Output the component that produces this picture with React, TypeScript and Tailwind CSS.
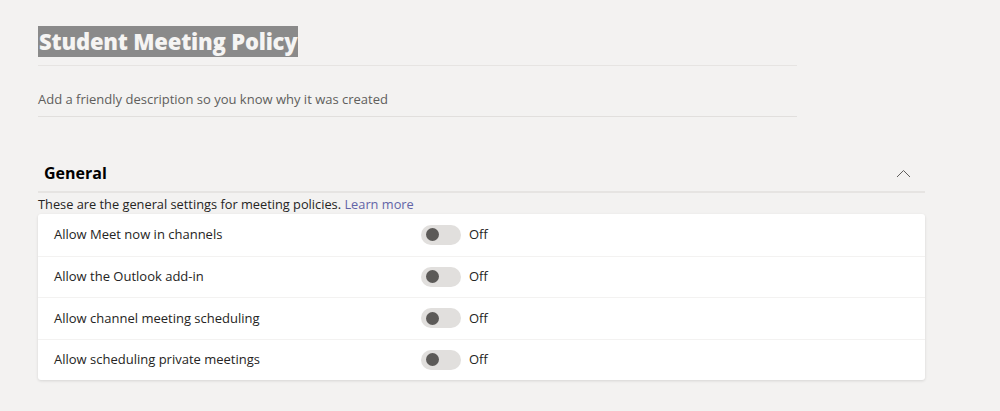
import React from "react";

const rows = [
  "Allow Meet now in channels",
  "Allow the Outlook add-in",
  "Allow channel meeting scheduling",
  "Allow scheduling private meetings",
];

function Toggle() {
  return (
    <div className="flex items-center">
      <div className="w-[40px] h-[20px] rounded-full bg-[#e1dfdd] flex items-center pl-[5px]">
        <div className="w-[13px] h-[13px] rounded-full bg-[#5c5a58]" />
      </div>
      <span className="ml-[8px] text-[13px] text-[#252423]">Off</span>
    </div>
  );
}

export default function App() {
  return (
    <div
      className="w-[1000px] h-[411px] bg-[#f3f2f1] overflow-hidden"
      style={{ fontFamily: '"Open Sans", "Noto Sans", sans-serif' }}
    >
      <div className="pl-[38px] pt-[26px]">
        <div className="w-[759px]">
          <div className="pb-[8px] border-b border-[#e6e4e2]">
            <span className="inline-block bg-[#8a8a8a] text-[#f5f4f3] text-[22px] font-extrabold leading-[31px] px-[1px] tracking-[-0.2px]">
              Student Meeting Policy
            </span>
          </div>
          <div className="pt-[24px] pb-[8px] border-b border-[#e1dfdd] text-[13px] text-[#605e5c] leading-[18px]">
            Add a friendly description so you know why it was created
          </div>
        </div>
        <div className="w-[887px] mt-[44px]">
          <div className="flex items-center justify-between h-[32px] pb-[6px] border-b-2 border-[#e6e4e2] pl-[6px] pr-[14px]">
            <span className="text-[16px] font-bold text-[#000000]">General</span>
            <svg width="15" height="9" viewBox="0 0 15 9" fill="none">
              <path d="M1 8 L7.5 1.5 L14 8" stroke="#605e5c" strokeWidth="1" />
            </svg>
          </div>
          <div className="text-[12.8px] text-[#252423] leading-[20px] pt-[1px]">
            These are the general settings for meeting policies.{" "}
            <span className="text-[#6264a7]">Learn more</span>
          </div>
          <div className="bg-white rounded-[3px] shadow-[0_1px_3px_rgba(0,0,0,0.12)]">
            {rows.map((r, i) => (
              <div
                key={r}
                className={`flex items-center h-[41.5px] pl-[16px] ${i > 0 ? "border-t border-[#f3f2f1]" : ""}`}
              >
                <span className="w-[367px] text-[13px] text-[#252423]">{r}</span>
                <Toggle />
              </div>
            ))}
          </div>
        </div>
      </div>
    </div>
  );
}
